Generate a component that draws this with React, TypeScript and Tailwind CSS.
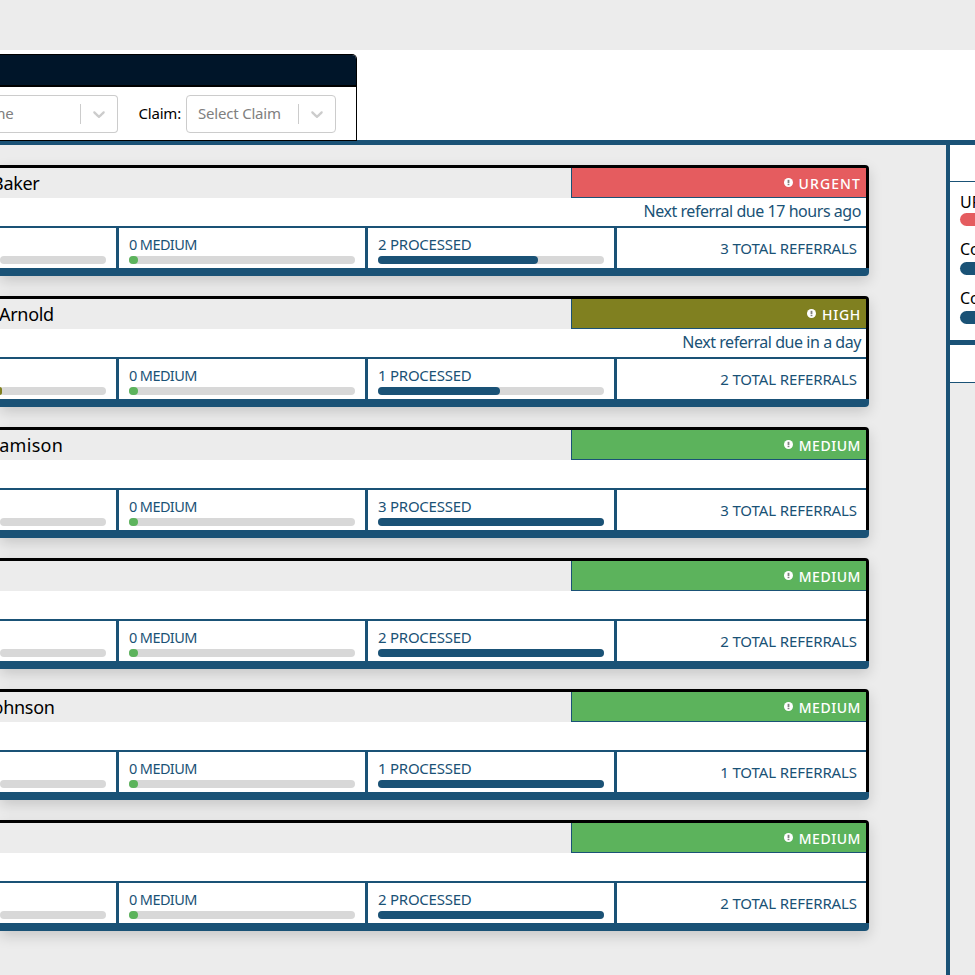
import React from 'react';

const FONT = "font-['Noto_Sans','Open_Sans',sans-serif]";

interface Referral {
  name: string;
  nameClass: string;
  priority: string;
  badgeClass: string;
  due: string;
  lowBar: string;
  processed: number;
  processedClass: string;
  total: number;
}

const MEDIUM_BADGE = 'bg-[#5cb35c] tracking-[0.55px]';

const referrals: Referral[] = [
  { name: 'Baker', nameClass: 'ml-[-8px]', priority: 'URGENT', badgeClass: 'bg-[#e55c5f] tracking-[1.1px]', due: 'Next referral due 17 hours ago', lowBar: 'w-0', processed: 2, processedClass: 'w-[71%]', total: 3 },
  { name: 'Arnold', nameClass: 'ml-[-1px]', priority: 'HIGH', badgeClass: 'bg-[#808020] tracking-[0.7px]', due: 'Next referral due in a day', lowBar: 'w-[2px]', processed: 1, processedClass: 'w-[54%]', total: 2 },
  { name: 'Jamison', nameClass: 'ml-[-6px] tracking-[0.3px]', priority: 'MEDIUM', badgeClass: MEDIUM_BADGE, due: '', lowBar: 'w-0', processed: 3, processedClass: 'w-full', total: 3 },
  { name: '', nameClass: 'ml-0', priority: 'MEDIUM', badgeClass: MEDIUM_BADGE, due: '', lowBar: 'w-0', processed: 2, processedClass: 'w-full', total: 2 },
  { name: 'Johnson', nameClass: 'ml-[-12px]', priority: 'MEDIUM', badgeClass: MEDIUM_BADGE, due: '', lowBar: 'w-0', processed: 1, processedClass: 'w-full', total: 1 },
  { name: '', nameClass: 'ml-0', priority: 'MEDIUM', badgeClass: MEDIUM_BADGE, due: '', lowBar: 'w-0', processed: 2, processedClass: 'w-full', total: 2 },
];

function AlertDot() {
  return (
    <svg className="w-[9px] h-[9px] mr-[6px] mb-[1px]" viewBox="0 0 10 10">
      <circle cx="5" cy="5" r="5" fill="#fff" />
      <rect x="4" y="2" width="2" height="3.6" fill="#808080" />
      <rect x="4" y="6.4" width="2" height="1.6" fill="#808080" />
    </svg>
  );
}

function Chevron() {
  return (
    <svg className="w-5 h-5 text-[#cccccc]" viewBox="0 0 20 20" fill="currentColor">
      <path d="M4.516 7.548c.436-.446 1.043-.481 1.576 0L10 11.295l3.908-3.747c.533-.481 1.141-.446 1.574 0 .436.445.408 1.197 0 1.615-.406.418-4.695 4.502-4.695 4.502a1.095 1.095 0 0 1-1.576 0S4.924 9.581 4.516 9.163c-.409-.418-.436-1.17 0-1.615z" />
    </svg>
  );
}

function ReferralCard({ referral }: { referral: Referral }) {
  return (
    <div className="w-[869px] h-[111px] rounded-r-[4px] shadow-[0_5px_14px_rgba(0,0,0,0.16)] flex flex-col">
      <div className="h-[103px] border-t-[3px] border-r-[3px] border-black rounded-tr-[4px] bg-white flex flex-col">
        <div className="h-[30px] flex shrink-0">
          <div className="w-[571px] bg-[#ececec] text-[18px] leading-[30px] text-black whitespace-nowrap overflow-hidden tracking-[-0.3px]">
            <div className={referral.nameClass}>{referral.name}</div>
          </div>
          <div className={`flex-1 flex items-center justify-end pt-px pr-[5px] border-l border-b border-[#1a5276] text-white text-[14px] font-medium ${referral.badgeClass}`}>
            <AlertDot />
            {referral.priority}
          </div>
        </div>
        <div className="h-[28px] shrink-0 text-right pr-[5px] text-[#1a5276] text-[16px] leading-[27px] tracking-[-0.45px]">
          {referral.due}
        </div>
        <div className="flex-1 flex border-t-2 border-[#1a5276] text-[#1a5276]">
          <div className="w-[119px] shrink-0 border-r-[3px] border-[#1a5276] pr-[10px] pt-[28px]">
            <div className="h-2 rounded-full bg-[#d8d8d8]">
              <div className={`h-2 bg-[#808020] rounded-r-full ${referral.lowBar}`} />
            </div>
          </div>
          <div className="w-[249px] shrink-0 border-r-[3px] border-[#1a5276] px-[10px]">
            <div className="h-[28px] leading-[33px] text-[14.5px] tracking-[-0.6px]">0 MEDIUM</div>
            <div className="h-2 rounded-full bg-[#d8d8d8]">
              <div className="h-2 w-[9px] rounded-full bg-[#5cb35c]" />
            </div>
          </div>
          <div className="w-[249px] shrink-0 border-r-[3px] border-[#1a5276] px-[10px]">
            <div className="h-[28px] leading-[33px] text-[15px] tracking-[-0.25px]">{referral.processed} PROCESSED</div>
            <div className="h-2 rounded-full bg-[#d8d8d8]">
              <div className={`h-2 rounded-full bg-[#1a5276] ${referral.processedClass}`} />
            </div>
          </div>
          <div className="flex-1 text-right pr-[9px] leading-[41px] text-[15px] tracking-[-0.1px]">{referral.total} TOTAL REFERRALS</div>
        </div>
      </div>
      <div className="h-2 bg-[#1a5276] rounded-br-[4px]" />
    </div>
  );
}

export default function App() {
  return (
    <div className={`w-[975px] h-[975px] overflow-hidden bg-[#ececec] pt-[50px] ${FONT}`}>
      <div className="h-[90px] bg-white">
        <div className="w-[357px] h-[91px] relative pt-[4px]">
          <div className="h-[87px] border border-l-0 border-black rounded-tr-[5px] bg-white flex flex-col">
            <div className="h-[32px] bg-[#001529] rounded-tr-[4px] border-b-2 border-black" />
            <div className="flex-1 flex items-center justify-end pr-[20px] text-[15px] text-black tracking-[-0.2px]">
              <div className="w-[118px] shrink-0 h-[38px] mr-[21px] border border-l-0 border-[#cccccc] rounded-r-[4px] flex items-center text-[#808080]">
                <div className="w-[80px] shrink-0 flex justify-end pr-[66px] whitespace-nowrap">
                  <span className="shrink-0">Select Name</span>
                </div>
                <span className="w-px h-5 shrink-0 bg-[#cccccc]" />
                <span className="px-2"><Chevron /></span>
              </div>
              <span className="mr-[5px]">Claim:</span>
              <div className="w-[150px] shrink-0 h-[38px] border border-[#cccccc] rounded-[4px] flex items-center text-[#808080]">
                <span className="flex-1 pl-[11px] whitespace-nowrap">Select Claim</span>
                <span className="w-px h-5 bg-[#cccccc]" />
                <span className="px-2"><Chevron /></span>
              </div>
            </div>
          </div>
        </div>
      </div>
      <div className="h-[835px] border-t-[5px] border-[#1a5276] flex">
        <div className="w-[946px] shrink-0 pt-[20px] flex flex-col gap-[20px]">
          {referrals.map((r, i) => (
            <ReferralCard key={i} referral={r} />
          ))}
        </div>
        <div className="w-[4px] bg-[#1a5276] shrink-0" />
        <div className="flex-1 self-start bg-white text-[16px] text-black overflow-hidden whitespace-nowrap">
          <div className="h-[37px] border-b border-[#1a5276]" />
          <div className="h-[158px] pl-[10px] pt-[10px]">
            <div className="h-[20px] leading-[20px]">URGENT</div>
            <div className="h-[13px] w-[60px] mt-[1px] rounded-full bg-[#e55c5f]" />
            <div className="h-[20px] leading-[20px] mt-[13px]">Completed</div>
            <div className="h-[13px] w-[60px] mt-[3px] rounded-full bg-[#1a5276]" />
            <div className="h-[20px] leading-[20px] mt-[13px]">Completed</div>
            <div className="h-[13px] w-[60px] mt-[3px] rounded-full bg-[#1a5276]" />
          </div>
          <div className="h-[5px] bg-[#1a5276]" />
          <div className="h-[38px] border-b border-[#1a5276]" />
        </div>
      </div>
    </div>
  );
}
